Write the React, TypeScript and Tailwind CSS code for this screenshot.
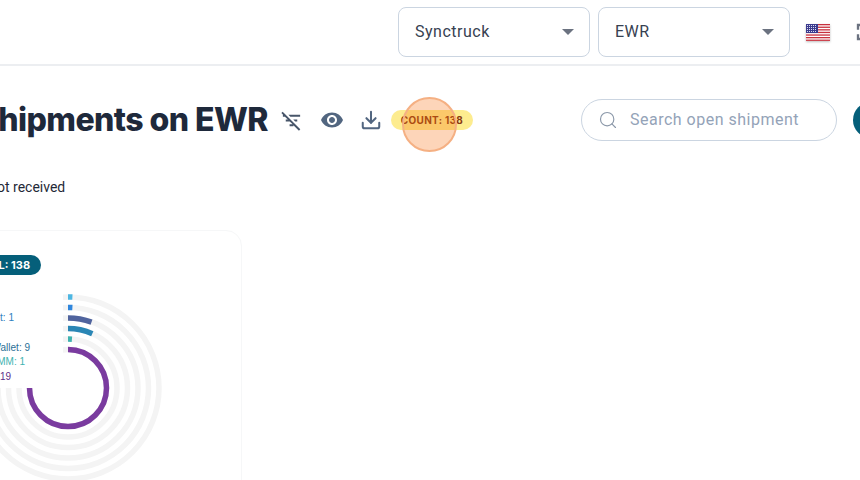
import React from 'react';
import { Search, Download } from 'lucide-react';
import { MdFilterListOff, MdVisibility, MdFullscreen } from 'react-icons/md';

function Caret() {
  return (
    <svg width="12" height="6" viewBox="0 0 12 6" className="shrink-0">
      <path d="M0 0h12L6 6z" fill="#6b7280" />
    </svg>
  );
}

function Select({ label }: { label: string }) {
  return (
    <div className="flex h-[50px] w-[192px] shrink-0 items-center justify-between rounded-lg border border-[#cbd5e1] pl-4 pr-[15px] font-['Roboto',sans-serif] text-base tracking-[0.5px] text-[#374151]">
      <span>{label}</span>
      <Caret />
    </div>
  );
}

function UsFlag() {
  const stripes = [0, 2, 4, 6, 8, 10, 12];
  return (
    <svg width="24" height="17" viewBox="0 0 24 17" className="shrink-0 drop-shadow-[0_1px_1px_rgba(0,0,0,0.25)]">
      <rect width="24" height="17" fill="#fff" />
      {stripes.map(i => (
        <rect key={i} y={i * 1.3} width="24" height="1.3" fill="#c8313e" />
      ))}
      <rect width="12" height="9" fill="#3c3b8e" />
      {[1.5, 3.5, 5.5, 7.5].map(y =>
        [1.5, 3.5, 5.5, 7.5, 9.5].map(x => (
          <rect key={`${x}-${y}`} x={x - 0.5} y={y - 0.5} width="1" height="1" fill="#d8dcf0" />
        ))
      )}
    </svg>
  );
}

const rings = [
  { r: 91, color: '#4db6e2', dash: 4.5 },
  { r: 80.5, color: '#2f86dd', dash: 4.5 },
  { r: 70, color: '#50649e', dash: 24 },
  { r: 59.5, color: '#2a86b5', dash: 25 },
  { r: 49, color: '#3fb3b0', dash: 4 },
  { r: 38.5, color: '#7a3b9f', dash: 182 },
];

function RadialChart() {
  return (
    <svg width="200" height="200" viewBox="0 0 200 200" className="shrink-0">
      {rings.map(ring => (
        <g key={ring.r} fill="none" strokeWidth="5.5">
          <circle cx="100" cy="100" r={ring.r} stroke="#f4f4f4" />
          <circle
            cx="100"
            cy="100"
            r={ring.r}
            stroke={ring.color}
            strokeDasharray={`${ring.dash} 1000`}
            transform="rotate(-90 100 100)"
          />
        </g>
      ))}
    </svg>
  );
}

export default function App() {
  return (
    <div className="relative h-[480px] w-[860px] overflow-hidden bg-white font-['Roboto',sans-serif]">
      {/* Top bar */}
      <header className="flex h-[66px] items-center gap-2 border-b-2 border-[#eceef1] pl-[398px]">
        <Select label="Synctruck" />
        <Select label="EWR" />
        <div className="ml-[8px] flex shrink-0 items-center gap-[24px]">
          <UsFlag />
          <MdFullscreen size={28} className="-ml-[3px] shrink-0 text-[#6b7280]" />
        </div>
      </header>

      {/* Title row */}
      <div className="mt-[33px] flex h-[42px] items-center">
        <div className="-ml-[89px] flex w-[670px] shrink-0 items-center justify-end pr-[108px]">
          <h1 className="whitespace-nowrap font-['Inter',sans-serif] text-[32px] font-extrabold tracking-[-0.55px] text-[#1e293b]">
            Open Shipments on EWR
          </h1>
          <MdFilterListOff size={23} className="ml-[12px] shrink-0 text-[#475569]" />
          <MdVisibility size={24} className="ml-[17px] shrink-0 text-[#526680]" />
          <Download size={22} strokeWidth={2.2} className="ml-[16px] shrink-0 text-[#526680]" />
          <span className="ml-[9px] flex h-[20px] w-[82px] shrink-0 items-center justify-center rounded-full bg-[#fdec8f] font-['Inter',sans-serif] text-[10px] font-bold tracking-[0.3px] text-[#8a3a10]">
            COUNT: 138
          </span>
        </div>
        <div className="flex h-[42px] w-[256px] shrink-0 items-center rounded-full border border-[#cbd5e1] pl-[16px] text-base tracking-[0.5px] text-[#94a3b8]">
          <Search size={20} strokeWidth={1.4} className="mr-[12px] shrink-0 text-[#8b98a9]" />
          <span>Search open shipment</span>
        </div>
        <div className="ml-4 h-[36px] w-[36px] shrink-0 rounded-full bg-[#055f7a]" />
      </div>

      {/* Subtitle */}
      <p className="-ml-[13px] mt-[36px] whitespace-nowrap text-sm text-[#1f2937]">Not received</p>

      {/* Chart card */}
      <div className="relative -ml-[60px] mt-[33px] h-[300px] w-[302px] rounded-2xl border border-[#f6f7f8] pt-[24px]">
        <div className="ml-[17px] flex h-[20px] w-[83px] items-center justify-center rounded-full bg-[#055f7a] font-['Inter',sans-serif] text-[11px] font-bold text-white">
          TOTAL: 138
        </div>
        <div className="ml-[27px] mt-[13px] w-fit">
          <RadialChart />
        </div>
        {/* Chart tooltip */}
        <div className="absolute left-0 top-[59px] h-[98px] w-[122px] bg-white pt-[21px] text-right font-['Liberation_Sans',sans-serif] text-[10px] leading-[14.8px]">
          <p className="pr-[49px] text-[#2f7fc0]">Pallet: 1</p>
          <p className="h-[14.8px]" />
          <p className="pr-[33px] text-[#2a6f96]">Wallet: 9</p>
          <p className="pr-[38px] text-[#3fb3b0]">OMM: 1</p>
          <p className="pr-[52px] text-[#5e2d8a]">19</p>
        </div>
      </div>

      {/* Cursor highlight */}
      <div className="absolute left-[402px] top-[97px] h-[55px] w-[55px] rounded-full border-2 border-[#f5b083] bg-[#f97316]/30" />
    </div>
  );
}
